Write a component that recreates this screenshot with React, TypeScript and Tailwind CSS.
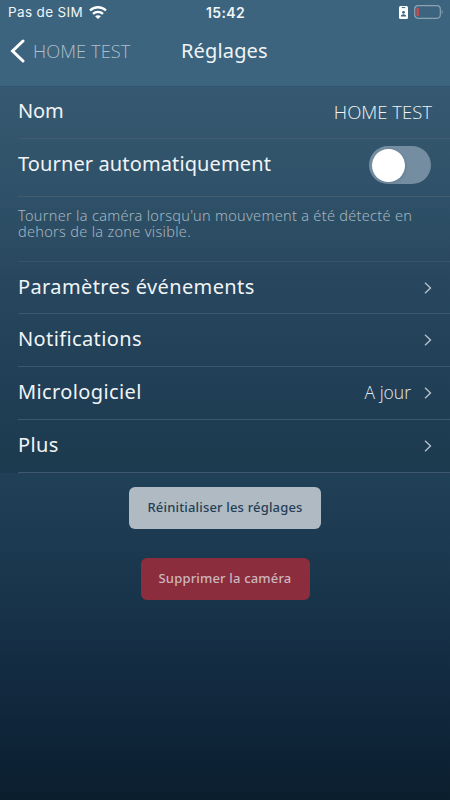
import React from "react";

const sans = "font-['Noto_Sans','Liberation_Sans',sans-serif]";
const light = "font-['Open_Sans','Liberation_Sans',sans-serif] font-light";

function Chevron() {
  return (
    <svg className="h-3 w-2 shrink-0" viewBox="0 0 8 12" fill="none">
      <path d="M1 .8 6.5 6 1 11.3" stroke="#b5c1cb" strokeWidth="1.35" />
    </svg>
  );
}

function StatusBar() {
  return (
    <div className="flex h-[25px] items-center pl-2 pr-[7px] font-['Inter','Liberation_Sans',sans-serif] text-[13.5px] text-[#f0f4f6]">
      <div className="flex flex-1 items-center gap-[6px]">
        <span className="whitespace-nowrap tracking-[0.36px]">Pas de SIM</span>
        <svg className="h-[13px] w-[18px]" viewBox="0 0 18 13" fill="none" stroke="#fff" strokeWidth="2.4">
          <path d="M1 4.5C5.5.1 12.5.1 17 4.5M4 7.8c2.8-2.6 7.2-2.6 10 0" />
          <path d="M9 12.9 6.1 10.2c1.6-1.4 4.2-1.4 5.8 0z" fill="#fff" stroke="none" />
        </svg>
      </div>
      <span className="text-[14px] font-semibold tracking-[0.35px]">15:42</span>
      <div className="flex flex-1 items-center justify-end gap-[6px]">
        <svg className="h-[13px] w-[9px]" viewBox="0 0 9 13">
          <rect width="9" height="13" rx="1.5" fill="#fff" />
          <path d="M2.7 1.6h3.6" stroke="#3c647e" strokeWidth="1" />
          <circle cx="4.5" cy="6.3" r="1.4" fill="#3c647e" />
          <path d="M1.8 10.6c0-3 5.4-3 5.4 0z" fill="#3c647e" />
        </svg>
        <svg className="mb-[2px] h-[14px] w-[29px]" viewBox="0 0 29 14" fill="none">
          <rect x=".7" y=".7" width="25.6" height="12.6" rx="3.5" stroke="#8ba3b3" strokeWidth="1.2" />
          <rect x="2.6" y="2.8" width="2" height="8.4" rx=".8" fill="#ff3b30" />
          <path d="M27.7 5v4c1.3-.5 1.3-3.5 0-4z" fill="#8ba3b3" />
        </svg>
      </div>
    </div>
  );
}

function NavRow({ label, value, height = "h-[53px]" }: { label: string; value?: string; height?: string }) {
  return (
    <div className={`ml-[18px] flex ${height} items-center border-b border-[#3d586c] pr-[18px]`}>
      <span className={`${sans} flex-1 pb-[2px] text-[20px] leading-6 tracking-[0.38px]`}>{label}</span>
      {value && <span className={`${light} mr-[13px] pb-[2px] text-[17.5px] text-[#e6ebef]`}>{value}</span>}
      <Chevron />
    </div>
  );
}

export default function App() {
  return (
    <div className={`${sans} flex h-[800px] w-[450px] flex-col overflow-hidden bg-[linear-gradient(to_bottom,#3c647e_0px,#3c647e_86px,#355b75_190px,#2d506a_280px,#254760_380px,#204057_480px,#18344b_600px,#142c42_660px,#10273c_710px,#0a1e2e_800px)] text-[#f0f4f6]`}>
      <StatusBar />
      <header className="flex h-[61px] items-start pt-[12px]">
        <div className="flex w-[181px] items-center pl-[10px]">
          <svg className="h-7 w-[15px]" viewBox="0 0 15 28" fill="none">
            <path d="M13 4 2.6 14 13 24" stroke="#fff" strokeWidth="3" strokeLinecap="round" />
          </svg>
          <span className={`${light} ml-[8px] whitespace-nowrap text-[18.3px] tracking-[0.05px] text-[#adbfca]`}>HOME TEST</span>
        </div>
        <h1 className="pt-px text-[20px] leading-[26px] tracking-[0.15px]">Réglages</h1>
      </header>

      <main className="border-t border-[#305570] bg-black/10">
        <div className="ml-[18px] flex h-[52px] items-center border-b border-[#435b6c] pr-[18px]">
          <span className="flex-1 pb-[3px] text-[20px] leading-6 tracking-[-0.1px]">Nom</span>
          <span className={`${light} pb-[2px] text-[18.5px] text-[#f0f4f6]`}>HOME TEST</span>
        </div>
        <div className="ml-[18px] flex h-[58px] items-center border-b border-[#435b6c] pr-[19px]">
          <span className="flex-1 pb-[8px] text-[20px] leading-6 tracking-[0.12px]">Tourner automatiquement</span>
          <div role="switch" aria-checked="false" className="mb-[5px] flex h-[38px] w-[62px] items-center rounded-full bg-[#758da0] p-[2.5px]">
            <span className="size-[33px] rounded-full bg-white shadow-[1px_1px_3px_#46627755]" />
          </div>
        </div>
        <p className="ml-[18px] h-[65px] whitespace-nowrap border-b border-[#385469] pt-[10px] text-[14.5px] font-light leading-4 tracking-[0.3px] text-[#a6b5c0]">
          Tourner la caméra lorsqu'un mouvement a été détecté en<br />dehors de la zone visible.
        </p>
        <NavRow label="Paramètres événements" height="h-[52px]" />
        <NavRow label="Notifications" />
        <NavRow label="Micrologiciel" value="A jour" />
        <NavRow label="Plus" />
      </main>

      <div className="flex flex-col items-center gap-[29px] pt-[14px] text-[13px] font-medium tracking-[0.17px]">
        <button className="h-[42px] w-[192px] whitespace-nowrap rounded-[6px] bg-[#afbac2] pb-px text-[#243e56]">Réinitialiser les réglages</button>
        <button className="h-[42px] w-[169px] whitespace-nowrap rounded-[6px] bg-[#8b2d3c] pb-px text-[#cdb6bf]">Supprimer la caméra</button>
      </div>
    </div>
  );
}
